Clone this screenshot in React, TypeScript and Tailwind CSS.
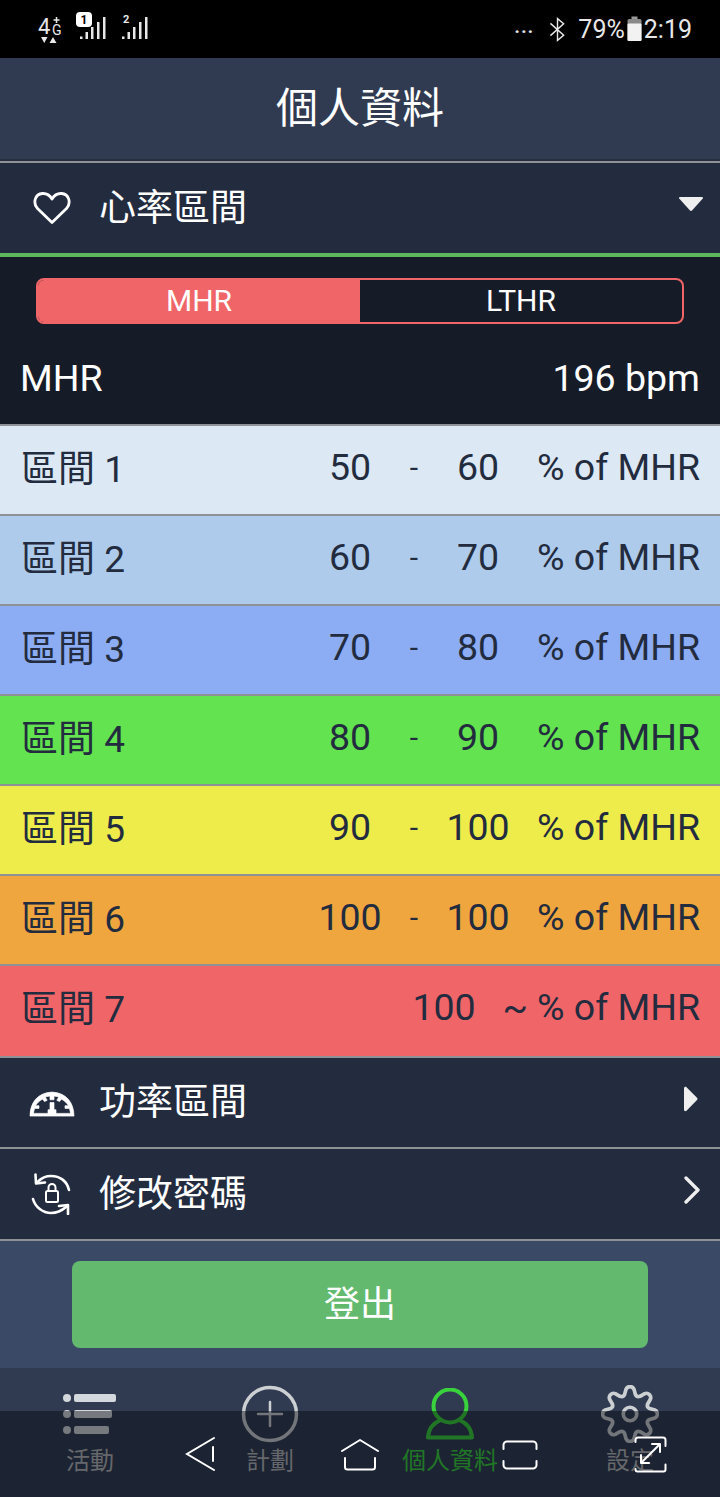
import React from 'react';

const cjk = "font-['Roboto','Noto_Sans_CJK_TC',sans-serif]";

interface Zone {
  name: string;
  low: string;
  high?: string;
  color: string;
}

const zones: Zone[] = [
  { name: '區間 1', low: '50', high: '60', color: 'bg-[#dce9f5]' },
  { name: '區間 2', low: '60', high: '70', color: 'bg-[#aecbec]' },
  { name: '區間 3', low: '70', high: '80', color: 'bg-[#8cadf3]' },
  { name: '區間 4', low: '80', high: '90', color: 'bg-[#62e34f]' },
  { name: '區間 5', low: '90', high: '100', color: 'bg-[#eeec4b]' },
  { name: '區間 6', low: '100', high: '100', color: 'bg-[#f0a63e]' },
  { name: '區間 7', low: '100', color: 'bg-[#f06567]' },
];

// 8 rounded teeth around the centre of a 60x60 box
const gearPath = () => {
  const pt = (r: number, a: number) => `${(30 + r * Math.cos(a)).toFixed(2)} ${(30 + r * Math.sin(a)).toFixed(2)}`;
  let d = '';
  for (let i = 0; i < 8; i++) {
    const a = (i * Math.PI) / 4 - Math.PI / 2;
    d += `${i === 0 ? 'M' : 'L'}${pt(21, a - 0.27)} L${pt(26, a - 0.16)} A4.500 4.500 0 0 1 ${pt(26, a + 0.16)} L${pt(21, a + 0.27)} `;
    d += `Q${pt(18.500, a + Math.PI / 8)} ${pt(21, a + Math.PI / 4 - 0.27)} `;
  }
  return d + 'Z';
};

const Signal = () => (
  <svg width="26" height="22" viewBox="0 0 26 22" fill="#e8e8e8">
    <rect x="0" y="19.500" width="2.500" height="2.500" />
    <rect x="5.500" y="15" width="2.500" height="7" />
    <rect x="11" y="10" width="2.500" height="12" />
    <rect x="17" y="5" width="2.500" height="17" />
    <rect x="23" y="0" width="2.500" height="22" />
  </svg>
);

const StatusBar = () => (
  <div className="flex h-[58px] items-center justify-between bg-black pl-[38px] pr-[28px] text-[#e8e8e8]">
    <div className="flex items-center">
      <div className="relative h-[30px] w-[24px]">
        <span className="absolute left-0 top-[3px] font-['Roboto',sans-serif] text-[22px] leading-[20px]">4</span>
        <span className="absolute left-[14px] top-[10px] font-['Roboto',sans-serif] text-[14px] leading-[12px]">G</span>
        <svg className="absolute left-[15px] top-[3px]" width="7" height="6" viewBox="0 0 7 6" stroke="#e8e8e8" strokeWidth="1.500">
          <path d="M3.500 0v6M0.500 3h6" />
        </svg>
        <svg className="absolute left-[3px] top-[23px]" width="20" height="7" viewBox="0 0 20 7" fill="#e8e8e8">
          <path d="M0 0h6.500L3.250 6z" />
          <path d="M8.500 6h7L12 0z" />
        </svg>
      </div>
      <div className="relative ml-[14px] h-[30px] w-[32px]">
        <div className="absolute left-0 top-[-2px] z-10 flex h-[15px] w-[16px] items-center justify-center rounded-[4px] bg-white font-['Roboto',sans-serif] text-[12px] font-bold leading-none text-black">1</div>
        <div className="absolute left-[4px] top-[3px] flex"><Signal /></div>
      </div>
      <div className="relative ml-[14px] h-[30px] w-[28px]">
        <span className="absolute left-[1px] top-[2px] font-['Roboto',sans-serif] text-[11px] font-bold leading-[8px]">2</span>
        <div className="absolute left-0 top-[3px] flex"><Signal /></div>
      </div>
    </div>
    <div className="flex items-center font-['Roboto',sans-serif] text-[25px] leading-none">
      <span className="mr-[15px] mt-[4px] text-[19px] font-bold tracking-[1px]">···</span>
      <svg width="17" height="25" viewBox="0 0 18 26" fill="none" stroke="#e8e8e8" strokeWidth="1.500" className="mr-[12px]">
        <path d="M1.500 6.500 15.500 19 9 24.500V1.500L15.500 7 1.500 19.500" />
      </svg>
      <span>79%</span>
      <svg width="15" height="26" viewBox="0 0 15 26" className="mx-[2px]">
        <rect x="4.500" y="0.500" width="6" height="3" fill="#999" />
        <rect x="0.500" y="3" width="14" height="22" rx="1.500" fill="#8a8a8a" />
        <rect x="0.500" y="7.500" width="14" height="17.500" rx="1" fill="#f2f2f2" />
      </svg>
      <span>2:19</span>
    </div>
  </div>
);

const HeartIcon = () => (
  <svg width="38" height="34" viewBox="0 0 38 34" fill="none" stroke="#fff" strokeWidth="2.800" strokeLinejoin="round">
    <path d="M19 31.500 4.500 17.500C-0.500 12 2 3 9.500 2.500c4-.2 7.500 2 9.500 5.500 2-3.500 5.500-5.700 9.500-5.500C36 3 38.500 12 33.500 17.500z" />
  </svg>
);

const GaugeIcon = () => (
  <svg width="46" height="29" viewBox="0 0 46 32" preserveAspectRatio="none" fill="#fff" stroke="#fff" strokeWidth="0.700">
    <path fillRule="evenodd" d="M1 31C1 15 10 5 23 4.500 36 5 45 15 45 31zM4.500 28h14.500v-4h2v-8h4v8h2v4h14.500c-.300-2.500-.700-4-1.200-5.500H36v-3h3.500c-1.700-3-4-5.500-7-7.200L30.500 15l-2.700-1.500 2-3.500c-1.800-.700-3.500-1-4.800-1.200V13h-4V8.800c-1.300.2-3 .500-4.800 1.200l2 3.500-2.700 1.500-2-2.700c-3 1.700-5.300 4.200-7 7.200H10v3H5.700c-.5 1.500-.900 3-1.200 5.500z" />
  </svg>
);

const LockRefreshIcon = () => (
  <svg width="42" height="42" viewBox="0 0 42 42" fill="none" stroke="#fff" strokeWidth="2.600" strokeLinecap="round" strokeLinejoin="round">
    <path d="M38 17C36 8 29 3 20 3 15 3 10.500 5 7 8.500" />
    <path d="M4.500 1.500 5 10.500 14 9.500" />
    <path d="M2 26c2 8 10 14 18 14 6 0 11-2.500 15-6" />
    <path d="M37 41 37 32 28 33" />
    <rect x="15" y="18" width="12" height="11" rx="1.500" strokeWidth="2" />
    <path d="M17.500 18v-3.500a3.500 3.500 0 0 1 7 0V18" strokeWidth="2" />
  </svg>
);

const MenuRow = ({ icon, label, right, border }: { icon: React.ReactNode; label: string; right: React.ReactNode; border?: string }) => (
  <div className={`flex items-center bg-[#232c3f] ${border ?? ''}`}>
    <div className="flex w-[99px] pl-[29px]">
      <div className="flex w-[46px] justify-center">{icon}</div>
    </div>
    <span className={`flex-1 ${cjk} text-[37px] leading-none text-white`}>{label}</span>
    <div className="flex w-[80px] items-center">{right}</div>
  </div>
);

const ZoneRow = ({ zone }: { zone: Zone }) => (
  <div className={`flex items-center border-t-2 border-[#8e9297] pl-[21px] pr-[20px] ${zone.high ? 'h-[90px] pb-[6px]' : 'h-[92px] pb-[8px]'} ${zone.color} font-['Roboto',sans-serif] text-[37.500px] text-[#232c3f]`}>
    <span className={`flex-1 ${cjk} pt-[6px] text-[37px]`}>{zone.name}</span>
    {zone.high ? (
      <>
        <span className="w-[64px] text-center">{zone.low}</span>
        <span className="w-[64px] text-center text-[30px]">-</span>
        <span className="mr-[27px] w-[64px] text-center">{zone.high}</span>
      </>
    ) : (
      <>
        <span className="w-[64px] text-center">{zone.low}</span>
        <span className="w-[61px] pr-[9px] text-right">~</span>
      </>
    )}
    <span className="w-[163px] whitespace-nowrap text-right">% of MHR</span>
  </div>
);

const NavItem = ({ icon, label, active }: { icon: React.ReactNode; label: string; active?: boolean }) => (
  <div className="flex w-[180px] flex-col items-center">
    <div className="flex h-[60px] items-center justify-center">{icon}</div>
    <span className={`${cjk} mt-[2px] text-[24px] leading-[30px] ${active ? 'text-[#39d23c]' : 'text-[#b4b6ba]'}`}>{label}</span>
  </div>
);

const TabBar = () => (
  <div className="flex h-[129px] bg-[#303b52] pt-[16px]">
    <NavItem
      label="活動"
      icon={
        <svg width="56" height="42" viewBox="0 0 56 42" fill="#d3d8dc">
          <circle cx="5" cy="5" r="4" />
          <rect x="12" y="1" width="42" height="8" rx="2" />
          <circle cx="5" cy="21" r="4" />
          <rect x="12" y="17" width="38" height="8" rx="2" />
          <circle cx="5" cy="37" r="4" />
          <rect x="12" y="33" width="35" height="8" rx="2" />
        </svg>
      }
    />
    <NavItem
      label="計劃"
      icon={
        <svg width="58" height="58" viewBox="0 0 58 58" fill="none" stroke="#cdd0d3" strokeWidth="3.500">
          <circle cx="29" cy="29" r="26.500" />
          <path d="M29 17v24M17 29h24" strokeWidth="2.500" strokeLinecap="round" />
        </svg>
      }
    />
    <NavItem
      active
      label="個人資料"
      icon={
        <svg width="48" height="52" viewBox="0 0 48 52" fill="none" stroke="#39d23c" strokeWidth="4">
          <circle cx="24" cy="18" r="16.500" />
          <path d="M15 32C7 35 2.500 41 2 49.500h44C45.500 41 41 35 33 32" strokeLinejoin="round" />
        </svg>
      }
    />
    <NavItem
      label="設定"
      icon={
        <svg width="58" height="58" viewBox="0 0 60 60" fill="none" stroke="#cdd0d3" strokeWidth="3.800" strokeLinejoin="round">
          <path d={gearPath()} />
          <circle cx="30" cy="30" r="7" />
        </svg>
      }
    />
  </div>
);

const SoftKeys = () => (
  <div className="absolute bottom-0 left-0 right-0 h-[86px] bg-[#05060a]/45">
    <svg className="absolute left-[184px] top-[25px]" width="32" height="36" viewBox="0 0 32 36" fill="none" stroke="#fff" strokeWidth="2" strokeLinecap="round">
      <path d="M30 2 3 18l27 16" />
      <path d="M29 11v14" />
    </svg>
    <svg className="absolute left-[340px] top-[27px]" width="40" height="34" viewBox="0 0 40 34" fill="none" stroke="#fff" strokeWidth="2" strokeLinejoin="round" strokeLinecap="round">
      <path d="M2 13 20 2l18 11" />
      <path d="M5 20v9a2.500 2.500 0 0 0 2.500 2.500h25a2.500 2.500 0 0 0 2.500-2.500v-9" />
    </svg>
    <svg className="absolute left-[502px] top-[29px]" width="36" height="30" viewBox="0 0 36 30" fill="none" stroke="#fff" strokeWidth="2" strokeLinecap="round">
      <path d="M1.500 9V5a3.500 3.500 0 0 1 3.500-3.500h26A3.500 3.500 0 0 1 34.500 5v4" />
      <path d="M1.500 21v4A3.500 3.500 0 0 0 5 28.500h26a3.500 3.500 0 0 0 3.500-3.500v-4" />
    </svg>
    <svg className="absolute left-[634px] top-[25px]" width="33" height="37" viewBox="0 0 33 37" fill="none" stroke="#fff" strokeWidth="2" strokeLinecap="round" strokeLinejoin="round">
      <path d="M1.500 6V4A2.500 2.500 0 0 1 4 1.500h25A2.500 2.500 0 0 1 31.500 4v6" />
      <path d="M1.500 33v.5A2 2 0 0 0 3.500 35.500h26a2 2 0 0 0 2-2v-5" />
      <path d="M7 27 26 8M18 8h8v8M7 19v8h8" />
    </svg>
  </div>
);

export default function App() {
  return (
    <div className="relative h-[1497px] w-[720px] overflow-hidden bg-[#161b28]">
      <StatusBar />
      <div className="flex h-[103px] items-center justify-center border-b-2 border-[#262e40] bg-[#303b52]">
        <h1 className={`${cjk} text-[42px] font-normal leading-none text-white`}>個人資料</h1>
      </div>
      <MenuRow
        border="h-[96px] border-t-2 border-t-[#8e9297] border-b-4 border-b-[#5cb85c]"
        icon={<HeartIcon />}
        label="心率區間"
        right={
          <svg width="26" height="16" viewBox="0 0 26 16" fill="#efefef" className="mb-[8px] ml-[38px]">
            <path d="M2 1h22a1 1 0 0 1 .800 1.600L14 14.500a1.500 1.500 0 0 1-2 0L1.200 2.600A1 1 0 0 1 2 1z" />
          </svg>
        }
      />
      <div className="bg-[#161b28]">
        <div className="flex px-[36px] pt-[21px]">
          <div className="flex h-[46px] w-full overflow-hidden rounded-[8px] border-2 border-[#f06567] font-['Roboto',sans-serif] text-[30px] text-white">
            <div className="flex flex-1 items-center justify-center bg-[#f06567] pb-[2px]">MHR</div>
            <div className="flex flex-1 items-center justify-center pb-[2px]">LTHR</div>
          </div>
        </div>
        <div className="flex h-[100px] items-center justify-between pl-[20px] pr-[20px] pt-[8px] font-['Roboto',sans-serif] text-[37.500px] text-white">
          <span>MHR</span>
          <span>196 bpm</span>
        </div>
      </div>
      {zones.map((zone) => (
        <ZoneRow key={zone.name} zone={zone} />
      ))}
      <MenuRow
        border="h-[91px] border-t-2 border-t-[#8e9297] pb-[1px]"
        icon={<GaugeIcon />}
        label="功率區間"
        right={
          <svg width="16" height="26" viewBox="0 0 16 26" fill="#efefef" className="mb-[7px] ml-[43px]">
            <path d="M1 2.500C1 1 2.500.300 3.500 1.300l10.500 10.500a1.600 1.600 0 0 1 0 2.300L3.500 24.700C2.500 25.700 1 25 1 23.500z" />
          </svg>
        }
      />
      <MenuRow
        border="h-[92px] border-t-2 border-t-[#8e9297]"
        icon={<LockRefreshIcon />}
        label="修改密碼"
        right={
          <svg width="16" height="28" viewBox="0 0 16 28" fill="none" stroke="#efefef" strokeWidth="3.300" strokeLinecap="round" strokeLinejoin="round" className="mb-[8px] ml-[44px]">
            <path d="M2 2l12 12L2 26" />
          </svg>
        }
      />
      <div className="h-[129px] border-t-2 border-[#8e9297] bg-[#3a4a66] px-[72px] pt-[20px]">
        <button className={`flex h-[87px] w-full items-center justify-center rounded-[8px] bg-[#63b96d] pt-[1px] ${cjk} text-[36px] text-white`}>登出</button>
      </div>
      <TabBar />
      <SoftKeys />
    </div>
  );
}
